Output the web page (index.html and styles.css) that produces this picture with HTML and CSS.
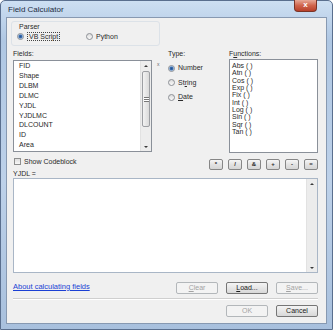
FILE: index.html
```html
<!DOCTYPE html>
<html lang="en">
<head>
  <meta charset="UTF-8" />
  <title>Field Calculator</title>
  <link rel="stylesheet" href="styles.css">
</head>
<body>

  <div class="window">
    <div class="titlebar">
      <span class="title">Field Calculator</span>
      <span class="close">x</span>
    </div>

    <div class="client">
      <div class="parser">
        <div class="parser-label">Parser</div>
        <div class="parser-opts">
          <label class="opt vb"><span class="radio on"></span><span class="focus">VB Script</span></label>
          <label class="opt"><span class="radio"></span><span>Python</span></label>
        </div>
      </div>

      <div class="main">
        <div class="col">
          <div class="cap">Fields:</div>
          <div class="listbox fields">
            <ul class="items">
              <li>FID</li>
              <li>Shape</li>
              <li>DLBM</li>
              <li>DLMC</li>
              <li>YJDL</li>
              <li>YJDLMC</li>
              <li>DLCOUNT</li>
              <li>ID</li>
              <li>Area</li>
            </ul>
            <div class="scrollbar">
              <span class="arrow up"></span>
              <span class="track">
                <span class="thumb"><span class="grip"></span></span>
              </span>
              <span class="arrow down"></span>
            </div>
          </div>
        </div>

        <div class="col mark-col"><span class="mark">x</span></div>

        <div class="col">
          <div class="cap">Type:</div>
          <div class="types">
            <label class="opt"><span class="radio on"></span><span>Number</span></label>
            <label class="opt"><span class="radio"></span><span>St<u>r</u>ing</span></label>
            <label class="opt"><span class="radio"></span><span><u>D</u>ate</span></label>
          </div>
        </div>

        <div class="col">
          <div class="cap">F<u>u</u>nctions:</div>
          <div class="listbox funcs">
            <ul class="items">
              <li>Abs ( )</li>
              <li>Atn ( )</li>
              <li>Cos ( )</li>
              <li>Exp ( )</li>
              <li>Fix ( )</li>
              <li>Int ( )</li>
              <li>Log ( )</li>
              <li>Sin ( )</li>
              <li>Sqr ( )</li>
              <li>Tan ( )</li>
            </ul>
          </div>
        </div>
      </div>

      <div class="options">
        <label class="opt"><span class="check"></span><span>Show Codeblock</span></label>
        <div class="ops">
          <span class="op">*</span>
          <span class="op">/</span>
          <span class="op">&amp;</span>
          <span class="op">+</span>
          <span class="op">-</span>
          <span class="op">=</span>
        </div>
      </div>

      <div class="expr-label">YJDL =</div>
      <div class="expr">
        <div class="expr-text"></div>
        <div class="scrollbar">
          <span class="arrow up"></span>
          <span class="track"></span>
          <span class="arrow down"></span>
        </div>
      </div>

      <div class="actions">
        <a class="link" href="#">About calculating fields</a>
        <div class="btns">
          <span class="btn off"><u>C</u>lear</span>
          <span class="btn"><u>L</u>oad...</span>
          <span class="btn off"><u>S</u>ave...</span>
        </div>
      </div>

      <div class="sep"></div>

      <div class="btns end">
        <span class="btn off">OK</span>
        <span class="btn">Cancel</span>
      </div>
    </div>
  </div>

</body>
</html>
```

FILE: styles.css
```css
* {
  box-sizing: border-box;
}
body {
  margin: 0;
  font-family: "Liberation Sans", Arial, sans-serif;
  font-size: 7px;
  color: #2a2a2a;
  background: #fff;
}
u {
  text-decoration: underline;
}
.window {
  width: 333px;
  height: 330px;
  display: flex;
  flex-direction: column;
  padding: 0 5px 5px 5px;
  background: linear-gradient(to bottom, #cddff2, #afc7e3 40px, #bdd1e9 180px, #a8c0dd);
  border: 1px solid #5a6f8e;
  border-radius: 5px 5px 0 0;
}
.titlebar {
  height: 16px;
  display: flex;
  justify-content: space-between;
  align-items: flex-start;
}
.title {
  font-size: 8px;
  margin: 4px 0 0 2px;
  color: #1d2c42;
}
.close {
  width: 23px;
  height: 12px;
  margin: -1px 10px 0 0;
  border: 1px solid #7a3326;
  border-top: none;
  border-radius: 0 0 4px 4px;
  background: linear-gradient(to bottom, #e7a896, #d0644c 50%, #b8402a);
  color: #fff;
  font-weight: bold;
  font-size: 8px;
  line-height: 10px;
  text-align: center;
}
.client {
  flex: 1;
  border: 1px solid #8799b1;
  background: #f0f0f0;
  padding: 3px 8px 0 6px;
}

/* parser group */
.parser {
  width: 149px;
  height: 25px;
  margin-left: -2px;
  border: 1px solid #dce2e8;
  border-radius: 3px;
  padding: 1px 0 0 5px;
}
.parser-label {
  padding-left: 2px;
  line-height: 8px;
}
.parser-opts {
  display: flex;
  margin-top: 1px;
}
.opt {
  display: flex;
  align-items: center;
  gap: 3px;
  line-height: 9px;
}
.opt.vb {
  width: 69px;
}
.focus {
  border: 1px dotted #444;
  padding: 0 1px;
  line-height: 7px;
}
.radio {
  width: 7px;
  height: 7px;
  border-radius: 50%;
  border: 1px solid #8c9096;
  background: linear-gradient(#dcdcdc, #fafafa);
  flex: none;
}
.radio.on {
  background: radial-gradient(circle, #24528f 0, #3b6eb0 1.4px, #9ebde2 2.2px, #eef2f7 3px);
}
.check {
  width: 7px;
  height: 7px;
  border: 1px solid #8e8f8f;
  background: linear-gradient(#dedede, #f8f8f8);
  flex: none;
}

/* fields / type / functions */
.main {
  display: grid;
  grid-template-columns: 139px 16px 61px 89px;
  margin-top: 3px;
}
.cap {
  height: 10px;
  line-height: 9px;
}
.listbox {
  background: #fff;
  border: 1px solid #8a9099;
  display: flex;
}
.fields {
  height: 92px;
  margin-top: 1px;
}
.funcs {
  height: 94px;
}
.items {
  list-style: none;
  margin: 0;
  padding: 0;
  flex: 1;
  color: #2a2a2a;
}
.fields .items {
  padding: 0 0 0 5px;
}
.fields .items li {
  line-height: 9.9px;
}
.funcs .items {
  padding: 2px 0 0 2px;
}
.funcs .items li {
  line-height: 7.35px;
}
.scrollbar {
  width: 11px;
  display: flex;
  flex-direction: column;
  background: #ededed;
  border-left: 1px solid #e2e2e2;
}
.arrow {
  height: 9px;
  display: flex;
  justify-content: center;
  align-items: center;
}
.arrow::before {
  content: "";
  border-left: 2px solid transparent;
  border-right: 2px solid transparent;
}
.arrow.up::before {
  border-bottom: 2px solid #3a3a3a;
}
.arrow.down::before {
  border-top: 2px solid #3a3a3a;
}
.track {
  flex: 1;
  display: flex;
  flex-direction: column;
}
.thumb {
  height: 56px;
  margin: 1px 1px 0 1px;
  border: 1px solid #9d9fa3;
  border-radius: 2px;
  background: linear-gradient(to right, #f3f3f3, #dadada);
  display: flex;
  justify-content: center;
  align-items: center;
}
.grip {
  width: 5px;
  height: 5px;
  border-top: 1px solid #777;
  border-bottom: 1px solid #777;
  background: linear-gradient(#fff 0 1px, #777 1px 2px, #fff 2px);
}
.mark-col {
  padding: 11px 0 0 5px;
}
.mark {
  font-size: 5px;
  color: #6a6a6a;
}
.types {
  display: flex;
  flex-direction: column;
  gap: 4.5px;
  padding-top: 4px;
}
.types .opt {
  gap: 3px;
  line-height: 10px;
}

/* codeblock and operators */
.options {
  display: flex;
  justify-content: space-between;
  margin-top: 5px;
  height: 12px;
}
.options .opt {
  align-items: flex-start;
  line-height: 7px;
  padding-left: 1px;
}
.ops {
  display: flex;
  gap: 5px;
  margin-top: 1px;
}
.op {
  width: 14px;
  height: 11px;
  border: 1px solid #868686;
  border-radius: 2px;
  background: linear-gradient(#f6f6f6, #e2e2e2 50%, #d5d5d5);
  text-align: center;
  line-height: 9px;
  font-weight: bold;
  font-size: 6px;
}
.expr-label {
  line-height: 7px;
}
.expr {
  height: 95px;
  margin-top: 1px;
  border: 1px solid #a9b6c6;
  background: #fff;
  display: flex;
}
.expr-text {
  flex: 1;
}
.expr .scrollbar {
  width: 11px;
  background: #ececec;
}

/* bottom buttons */
.actions {
  display: flex;
  justify-content: space-between;
  align-items: center;
  margin-top: 9px;
}
.link {
  color: #1a3fd4;
  text-decoration: underline;
  font-size: 7.5px;
  margin-top: -3px;
}
.btns {
  display: flex;
  gap: 8px;
}
.btns.end {
  justify-content: flex-end;
  margin-top: 5px;
}
.btn {
  width: 42px;
  height: 12px;
  border: 1px solid #767676;
  border-radius: 2px;
  background: linear-gradient(#f4f4f4, #e6e6e6 50%, #d8d8d8);
  text-align: center;
  line-height: 10px;
  color: #1a1a1a;
}
.btn.off {
  border-color: #b3b7ba;
  background: #f3f3f3;
  color: #a3a3a3;
}
.sep {
  margin-top: 4px;
  border-top: 1px solid #cfcfcf;
  border-bottom: 1px solid #fff;
}
```
